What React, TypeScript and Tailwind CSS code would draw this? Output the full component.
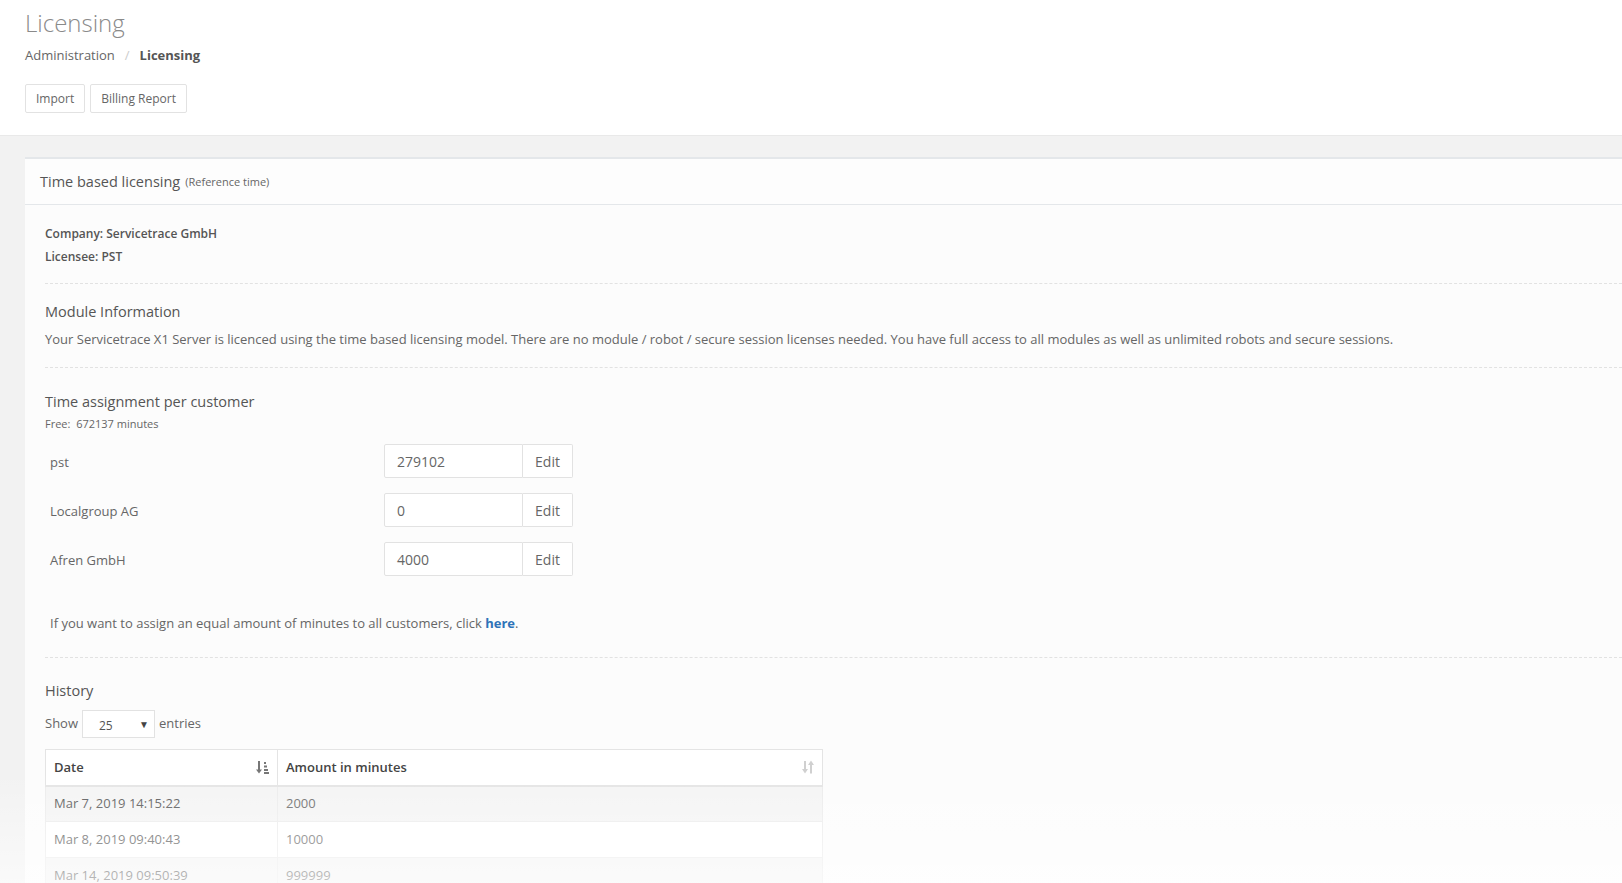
import { ReactNode } from "react";

const customers = [
  { name: "pst", minutes: "279102" },
  { name: "Localgroup AG", minutes: "0" },
  { name: "Afren GmbH", minutes: "4000" },
];

const history = [
  { date: "Mar 7, 2019 14:15:22", amount: "2000" },
  { date: "Mar 8, 2019 09:40:43", amount: "10000" },
  { date: "Mar 14, 2019 09:50:39", amount: "999999" },
];

const Dashed = ({ className }: { className: string }) => (
  <div className={`border-t border-dashed border-[#e2e2e2] ${className}`} />
);

const SortAmount = () => (
  <svg width="13" height="14" viewBox="0 0 13 14" className="text-[#777]">
    <path d="M3 1v10" stroke="currentColor" strokeWidth="2" />
    <path d="M0 9.5h6L3 13.5z" fill="currentColor" />
    <rect x="8" y="2" width="2" height="2" fill="currentColor" />
    <rect x="8" y="5.5" width="3" height="2" fill="currentColor" />
    <rect x="8" y="9" width="4" height="2" fill="currentColor" />
    <rect x="8" y="12" width="5" height="2" fill="currentColor" />
  </svg>
);

const SortBoth = () => (
  <svg width="12" height="14" viewBox="0 0 12 14" className="text-[#d0d0d0]">
    <path d="M3 1v9" stroke="currentColor" strokeWidth="2" />
    <path d="M0 9h6l-3 4.5z" fill="currentColor" />
    <path d="M9 4v9.5" stroke="currentColor" strokeWidth="2" />
    <path d="M6 5h6L9 0.5z" fill="currentColor" />
  </svg>
);

const Heading = ({ children, className }: { children: ReactNode; className?: string }) => (
  <h3 className={`text-[14.5px] font-medium leading-[20px] text-[#555] ${className ?? ""}`}>{children}</h3>
);

const App = () => {
  return (
    <div className="relative h-[883px] overflow-hidden bg-[#f2f2f2] font-['Open_Sans',sans-serif] text-[13px] text-[#666]">
      <header className="bg-white px-[25px] pt-[7px] pb-[22px] border-b border-[#e9e9e9]">
        <h1 className="text-[24px] font-light leading-[32px] text-[#8a8a8a]">Licensing</h1>
        <div className="mt-[6px] flex items-center leading-[20px]">
          <span className="text-[#666]">Administration</span>
          <span className="mx-[10px] text-[#ccc]">/</span>
          <span className="font-bold text-[#555]">Licensing</span>
        </div>
        <div className="mt-[19px] flex gap-[5px]">
          <button className="h-[29px] rounded-[2px] border border-[#e2e2e2] bg-white px-[10px] text-[12px] text-[#666]">
            Import
          </button>
          <button className="h-[29px] rounded-[2px] border border-[#e2e2e2] bg-white px-[10px] text-[12px] text-[#666]">
            Billing Report
          </button>
        </div>
      </header>

      <div className="pl-[25px] pt-[21px]">
        <div className="border-t-2 border-[#e4e7ea] bg-[#fcfcfc]">
          <div className="flex h-[46px] items-center border-b border-[#e4e7ea] bg-[#fdfdfd] px-[15px]">
            <span className="text-[14.5px] font-medium text-[#555]">Time based licensing</span>
            <span className="ml-[5px] mt-[2px] text-[11px] text-[#666]">(Reference time)</span>
          </div>

          <div className="pl-[20px] pt-[17px]">
            <div className="text-[12px] font-semibold leading-[23px] text-[#555]">
              <div>Company: Servicetrace GmbH</div>
              <div>Licensee: PST</div>
            </div>

            <Dashed className="mt-[15px]" />

            <Heading className="mt-[18px]">Module Information</Heading>
            <p className="mt-[7px] leading-[20px]">
              Your Servicetrace X1 Server is licenced using the time based licensing model. There are no module / robot / secure session licenses needed. You have full access to all modules as well as unlimited robots and secure sessions.
            </p>

            <Dashed className="mt-[18px]" />

            <Heading className="mt-[24px]">Time assignment per customer</Heading>
            <div className="mt-[4px] text-[11px] leading-[16px] text-[#666]">Free:&nbsp; 672137 minutes</div>

            <div className="mt-[12px] flex flex-col gap-[15px]">
              {customers.map((c) => (
                <div key={c.name} className="flex items-center">
                  <div className="w-[339px] pl-[5px] pt-[3px]">{c.name}</div>
                  <div className="flex h-[34px]">
                    <div className="flex w-[139px] items-center rounded-l-[2px] border border-[#e2e2e2] bg-white px-[12px] text-[14px] text-[#666]">
                      {c.minutes}
                    </div>
                    <button className="w-[50px] rounded-r-[2px] border border-l-0 border-[#e2e2e2] bg-white text-[14px] text-[#666]">
                      Edit
                    </button>
                  </div>
                </div>
              ))}
            </div>

            <p className="mt-[37px] pl-[5px] leading-[20px]">
              If you want to assign an equal amount of minutes to all customers, click{" "}
              <a className="font-bold text-[#2e73b8]">here</a>.
            </p>

            <Dashed className="mt-[24px]" />

            <Heading className="mt-[23px]">History</Heading>
            <div className="mt-[9px] flex items-center">
              <span>Show</span>
              <div className="relative mx-[4px] flex h-[28px] w-[73px] items-center border border-[#e2e2e2] bg-white pl-[16px] pt-[4px] text-[12px] text-[#555]">
                25
                <span className="absolute right-[5px] top-[6px] text-[10px] text-[#444]">▼</span>
              </div>
              <span>entries</span>
            </div>

            <table className="mt-[11px] w-[778px] border-collapse text-[13px]">
              <thead>
                <tr className="h-[36px] bg-white">
                  <th className="w-[232px] border border-b-2 border-[#e4e4e4] pl-[8px] pr-[8px] text-left font-semibold text-[#444]">
                    <div className="flex items-center justify-between">
                      <span>Date</span>
                      <SortAmount />
                    </div>
                  </th>
                  <th className="border border-b-2 border-[#e4e4e4] pl-[8px] pr-[8px] text-left font-semibold text-[#444]">
                    <div className="flex items-center justify-between">
                      <span>Amount in minutes</span>
                      <SortBoth />
                    </div>
                  </th>
                </tr>
              </thead>
              <tbody>
                {history.map((h, i) => (
                  <tr key={h.date} className={`h-[36px] ${i % 2 === 0 ? "bg-[#f4f4f4]" : "bg-white"}`}>
                    <td className="border border-[#ebebeb] pl-[8px] text-[#555]">{h.date}</td>
                    <td className="border border-[#ebebeb] pl-[8px] text-[#666]">{h.amount}</td>
                  </tr>
                ))}
              </tbody>
            </table>
            <div className="h-[40px]" />
          </div>
        </div>
      </div>

      <div className="pointer-events-none absolute bottom-0 left-0 right-0 h-[110px] bg-gradient-to-b from-white/0 to-white/60" />
    </div>
  );
};

export default App;
